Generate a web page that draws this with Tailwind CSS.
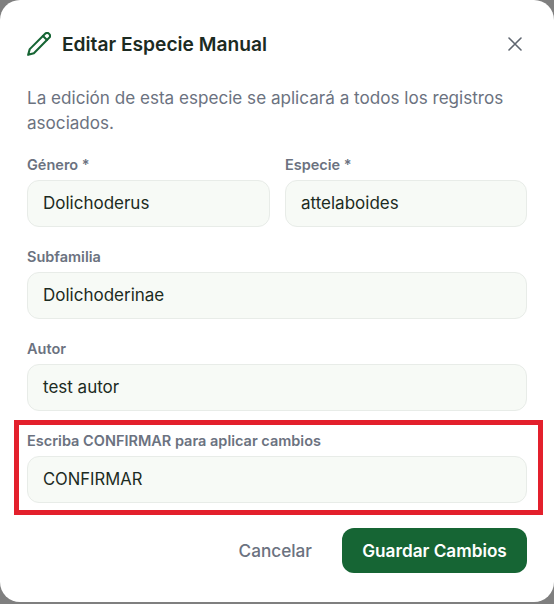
<!DOCTYPE html>
<html lang="en">
  <head>
    <meta charset="UTF-8" />
    <script src="https://cdn.jsdelivr.net/npm/@tailwindcss/browser@4"></script>
    <title>Editar Especie Manual</title>
  </head>
  <body class="bg-[#7f7f7f] font-['Inter',sans-serif]">
    <div class="relative w-[554px] h-[602px] bg-white rounded-[20px] pt-[26px] px-[27px]">
      <!-- header -->
      <div class="flex items-center h-[36px]">
        <svg class="w-[24px] h-[24px] mr-[11px] text-[#166534]" viewBox="1.5 1.5 21 21" fill="none" stroke="currentColor" stroke-width="1.8" stroke-linecap="round" stroke-linejoin="round">
          <path d="M2.5 21.5l1.4-5L17.6 2.9a2.1 2.1 0 0 1 3 0l.5.5a2.1 2.1 0 0 1 0 3L7.5 20.1z" />
          <path d="M15.5 5l3.5 3.5" />
        </svg>
        <h2 class="text-[19.2px] leading-[38px] font-semibold text-[#1c2b22]">Editar Especie Manual</h2>
        <svg class="ml-auto w-[24px] h-[24px] text-[#5f6670]" viewBox="0 0 24 24" fill="none" stroke="currentColor" stroke-width="1.6" stroke-linecap="round">
          <path d="M6 6l12 12M18 6L6 18" />
        </svg>
      </div>
      <p class="mt-[23px] text-[17.1px] leading-[25px] text-[#6b7280]">La edición de esta especie se aplicará a todos los registros asociados.</p>

      <!-- fields -->
      <div class="mt-[20px] grid grid-cols-[243px_242px] gap-x-[15px]">
        <div>
          <label class="block text-[14.5px] leading-[20px] font-semibold text-[#6b7280]">Género *</label>
          <div class="mt-[5px] h-[47px] flex items-center px-[15px] rounded-[12px] border border-[#e8ece8] bg-[#f7faf6] text-[17px] text-[#1c2b22]">Dolichoderus</div>
        </div>
        <div>
          <label class="block text-[14.5px] leading-[20px] font-semibold text-[#6b7280]">Especie *</label>
          <div class="mt-[5px] h-[47px] flex items-center px-[15px] rounded-[12px] border border-[#e8ece8] bg-[#f7faf6] text-[17px] text-[#1c2b22]">attelaboides</div>
        </div>
      </div>
      <div class="mt-[20px]">
        <label class="block text-[14.5px] leading-[20px] font-semibold text-[#6b7280]">Subfamilia</label>
        <div class="mt-[5px] h-[47px] flex items-center px-[15px] rounded-[12px] border border-[#e8ece8] bg-[#f7faf6] text-[17px] text-[#1c2b22]">Dolichoderinae</div>
      </div>
      <div class="mt-[20px]">
        <label class="block text-[14.5px] leading-[20px] font-semibold text-[#6b7280]">Autor</label>
        <div class="mt-[5px] h-[47px] flex items-center px-[15px] rounded-[12px] border border-[#e8ece8] bg-[#f7faf6] text-[17px] text-[#1c2b22]">test autor</div>
      </div>
      <div class="mt-[20px]">
        <label class="block text-[14.5px] leading-[20px] font-semibold text-[#6b7280]">Escriba CONFIRMAR para aplicar cambios</label>
        <div class="mt-[5px] h-[47px] flex items-center px-[15px] rounded-[12px] border border-[#e8ece8] bg-[#f7faf6] text-[16.6px] text-[#1c2b22]">CONFIRMAR</div>
      </div>

      <!-- footer -->
      <div class="mt-[25px] flex items-center justify-end">
        <button class="text-[17.2px] font-medium text-[#6b7280] mr-[30px]">Cancelar</button>
        <button class="h-[45px] w-[185px] rounded-[12px] bg-[#166534] text-[17.2px] font-semibold text-white">Guardar Cambios</button>
      </div>

      <!-- annotation box drawn over the screenshot -->
      <div class="absolute left-[14px] top-[420px] w-[529px] h-[95px] border-[5px] border-[#e3202c]"></div>
    </div>
  </body>
</html>
